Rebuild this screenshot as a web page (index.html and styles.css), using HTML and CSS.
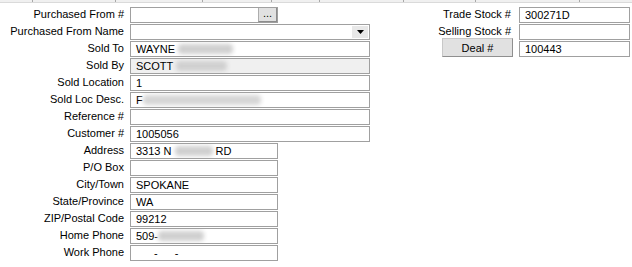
FILE: index.html
```html
<!DOCTYPE html>
<html>
<head>
<meta charset="utf-8">
<link rel="stylesheet" href="styles.css">
</head>
<body>
<div class="topbar">
  <span></span><span></span><span></span><span></span><span></span><span></span><span></span><span></span><span class="last"></span>
</div>
<div class="form">
  <div class="left">
    <label class="lbl">Purchased From #</label>
    <div class="field mid lookup"><span class="txt"></span><span class="dots">...</span></div>

    <label class="lbl">Purchased From Name</label>
    <div class="field wide combo"><span class="txt"></span><span class="arrow"><svg width="7" height="4" viewBox="0 0 7 4"><path d="M0 0H7L3.5 4Z" fill="#000"/></svg></span></div>

    <label class="lbl">Sold To</label>
    <div class="field wide">WAYNE <span class="blur b57"></span></div>

    <label class="lbl">Sold By</label>
    <div class="field wide ro">SCOTT <span class="blur b53"></span></div>

    <label class="lbl">Sold Location</label>
    <div class="field wide">1</div>

    <label class="lbl">Sold Loc Desc.</label>
    <div class="field wide">F<span class="blur b120"></span></div>

    <label class="lbl">Reference #</label>
    <div class="field wide"></div>

    <label class="lbl">Customer #</label>
    <div class="field wide">1005056</div>

    <label class="lbl">Address</label>
    <div class="field mid">3313 N <span class="blur b40"></span> RD</div>

    <label class="lbl">P/O Box</label>
    <div class="field mid"></div>

    <label class="lbl">City/Town</label>
    <div class="field mid">SPOKANE</div>

    <label class="lbl">State/Province</label>
    <div class="field mid">WA</div>

    <label class="lbl">ZIP/Postal Code</label>
    <div class="field mid">99212</div>

    <label class="lbl">Home Phone</label>
    <div class="field mid">509-<span class="blur b48"></span></div>

    <label class="lbl">Work Phone</label>
    <div class="field mid"><span class="dash d1">-</span><span class="dash d2">-</span></div>
  </div>

  <div class="right">
    <label class="lbl">Trade Stock #</label>
    <div class="field">300271D</div>

    <label class="lbl">Selling Stock #</label>
    <div class="field"></div>

    <button class="btn deal">Deal #</button>
    <div class="field">100443</div>
  </div>
</div>
</body>
</html>
```
FILE: styles.css
```css
html, body {
  margin: 0;
  padding: 0;
  background: #ffffff;
}
body {
  width: 632px;
  height: 267px;
  overflow: hidden;
  font-family: "Liberation Sans", Arial, sans-serif;
  font-size: 11px;
  color: #000;
}
.topbar {
  display: grid;
  grid-template-columns: 33px 83px 87px 69px 48px 84px 72px 104px 1fr;
  height: 2px;
  background: #f0f0f0;
  border-bottom: 1px solid #dadada;
}
.topbar span {
  border-right: 1px solid #a8a8a8;
}
.topbar span.last {
  border-right: none;
}
.form {
  display: flex;
  gap: 21px;
  padding-top: 4px;
}
.left {
  display: grid;
  grid-template-columns: 124px 240px;
  grid-auto-rows: 16px;
  column-gap: 6px;
  row-gap: 1px;
}
.right {
  display: grid;
  grid-template-columns: 120px 111px;
  grid-auto-rows: 16px;
  column-gap: 8px;
  row-gap: 1px;
}
.lbl {
  text-align: right;
  line-height: 14px;
  white-space: nowrap;
}
.field {
  box-sizing: border-box;
  height: 16px;
  border: 1px solid #a0a0a0;
  background: #fff;
  padding-left: 5px;
  line-height: 15px;
  white-space: pre;
  overflow: hidden;
  position: relative;
}
.field.mid {
  width: 148px;
}
.field.wide {
  width: 240px;
}
.field.ro {
  background: #f0f0f0;
}
.lookup, .combo {
  display: flex;
  padding-left: 0;
}
.lookup .txt, .combo .txt {
  flex: 1;
}
.dots {
  box-sizing: border-box;
  width: 19px;
  height: 15px;
  margin-top: -1px;
  background: #e1e1e1;
  border: 1px solid #adadad;
  border-right-color: #8c8c8c;
  border-bottom-color: #8c8c8c;
  text-align: center;
  line-height: 11px;
  font-size: 11px;
}
.arrow {
  box-sizing: border-box;
  width: 16px;
  height: 12px;
  margin: 1px 1px 0 0;
  background: #e8e8e8;
  display: flex;
  align-items: center;
  justify-content: center;
}
.arrow svg {
  display: block;
}
.blur {
  display: inline-block;
  height: 10px;
  vertical-align: -1px;
  background: #d0d0d0;
  border-radius: 4px;
  filter: blur(2px);
}
.b57 { width: 55px; }
.b53 { width: 51px; }
.b120 { width: 118px; background: #d6d6d6; }
.b40 { width: 38px; }
.b48 { width: 46px; }
.dash { display: inline-block; }
.d1 { margin-left: 18px; }
.d2 { margin-left: 17px; }
.btn {
  font-family: "Liberation Sans", Arial, sans-serif;
  font-size: 11px;
  color: #000;
  box-sizing: border-box;
  background: #e1e1e1;
  border: 1px solid #c8c8c8;
  border-right-color: #8f8f8f;
  border-bottom-color: #8f8f8f;
  padding: 0;
  margin: 0;
}
.deal {
  width: 71px;
  height: 19px;
  margin-top: -3px;
  justify-self: end;
  margin-right: -2px;
  line-height: 16px;
}
```
